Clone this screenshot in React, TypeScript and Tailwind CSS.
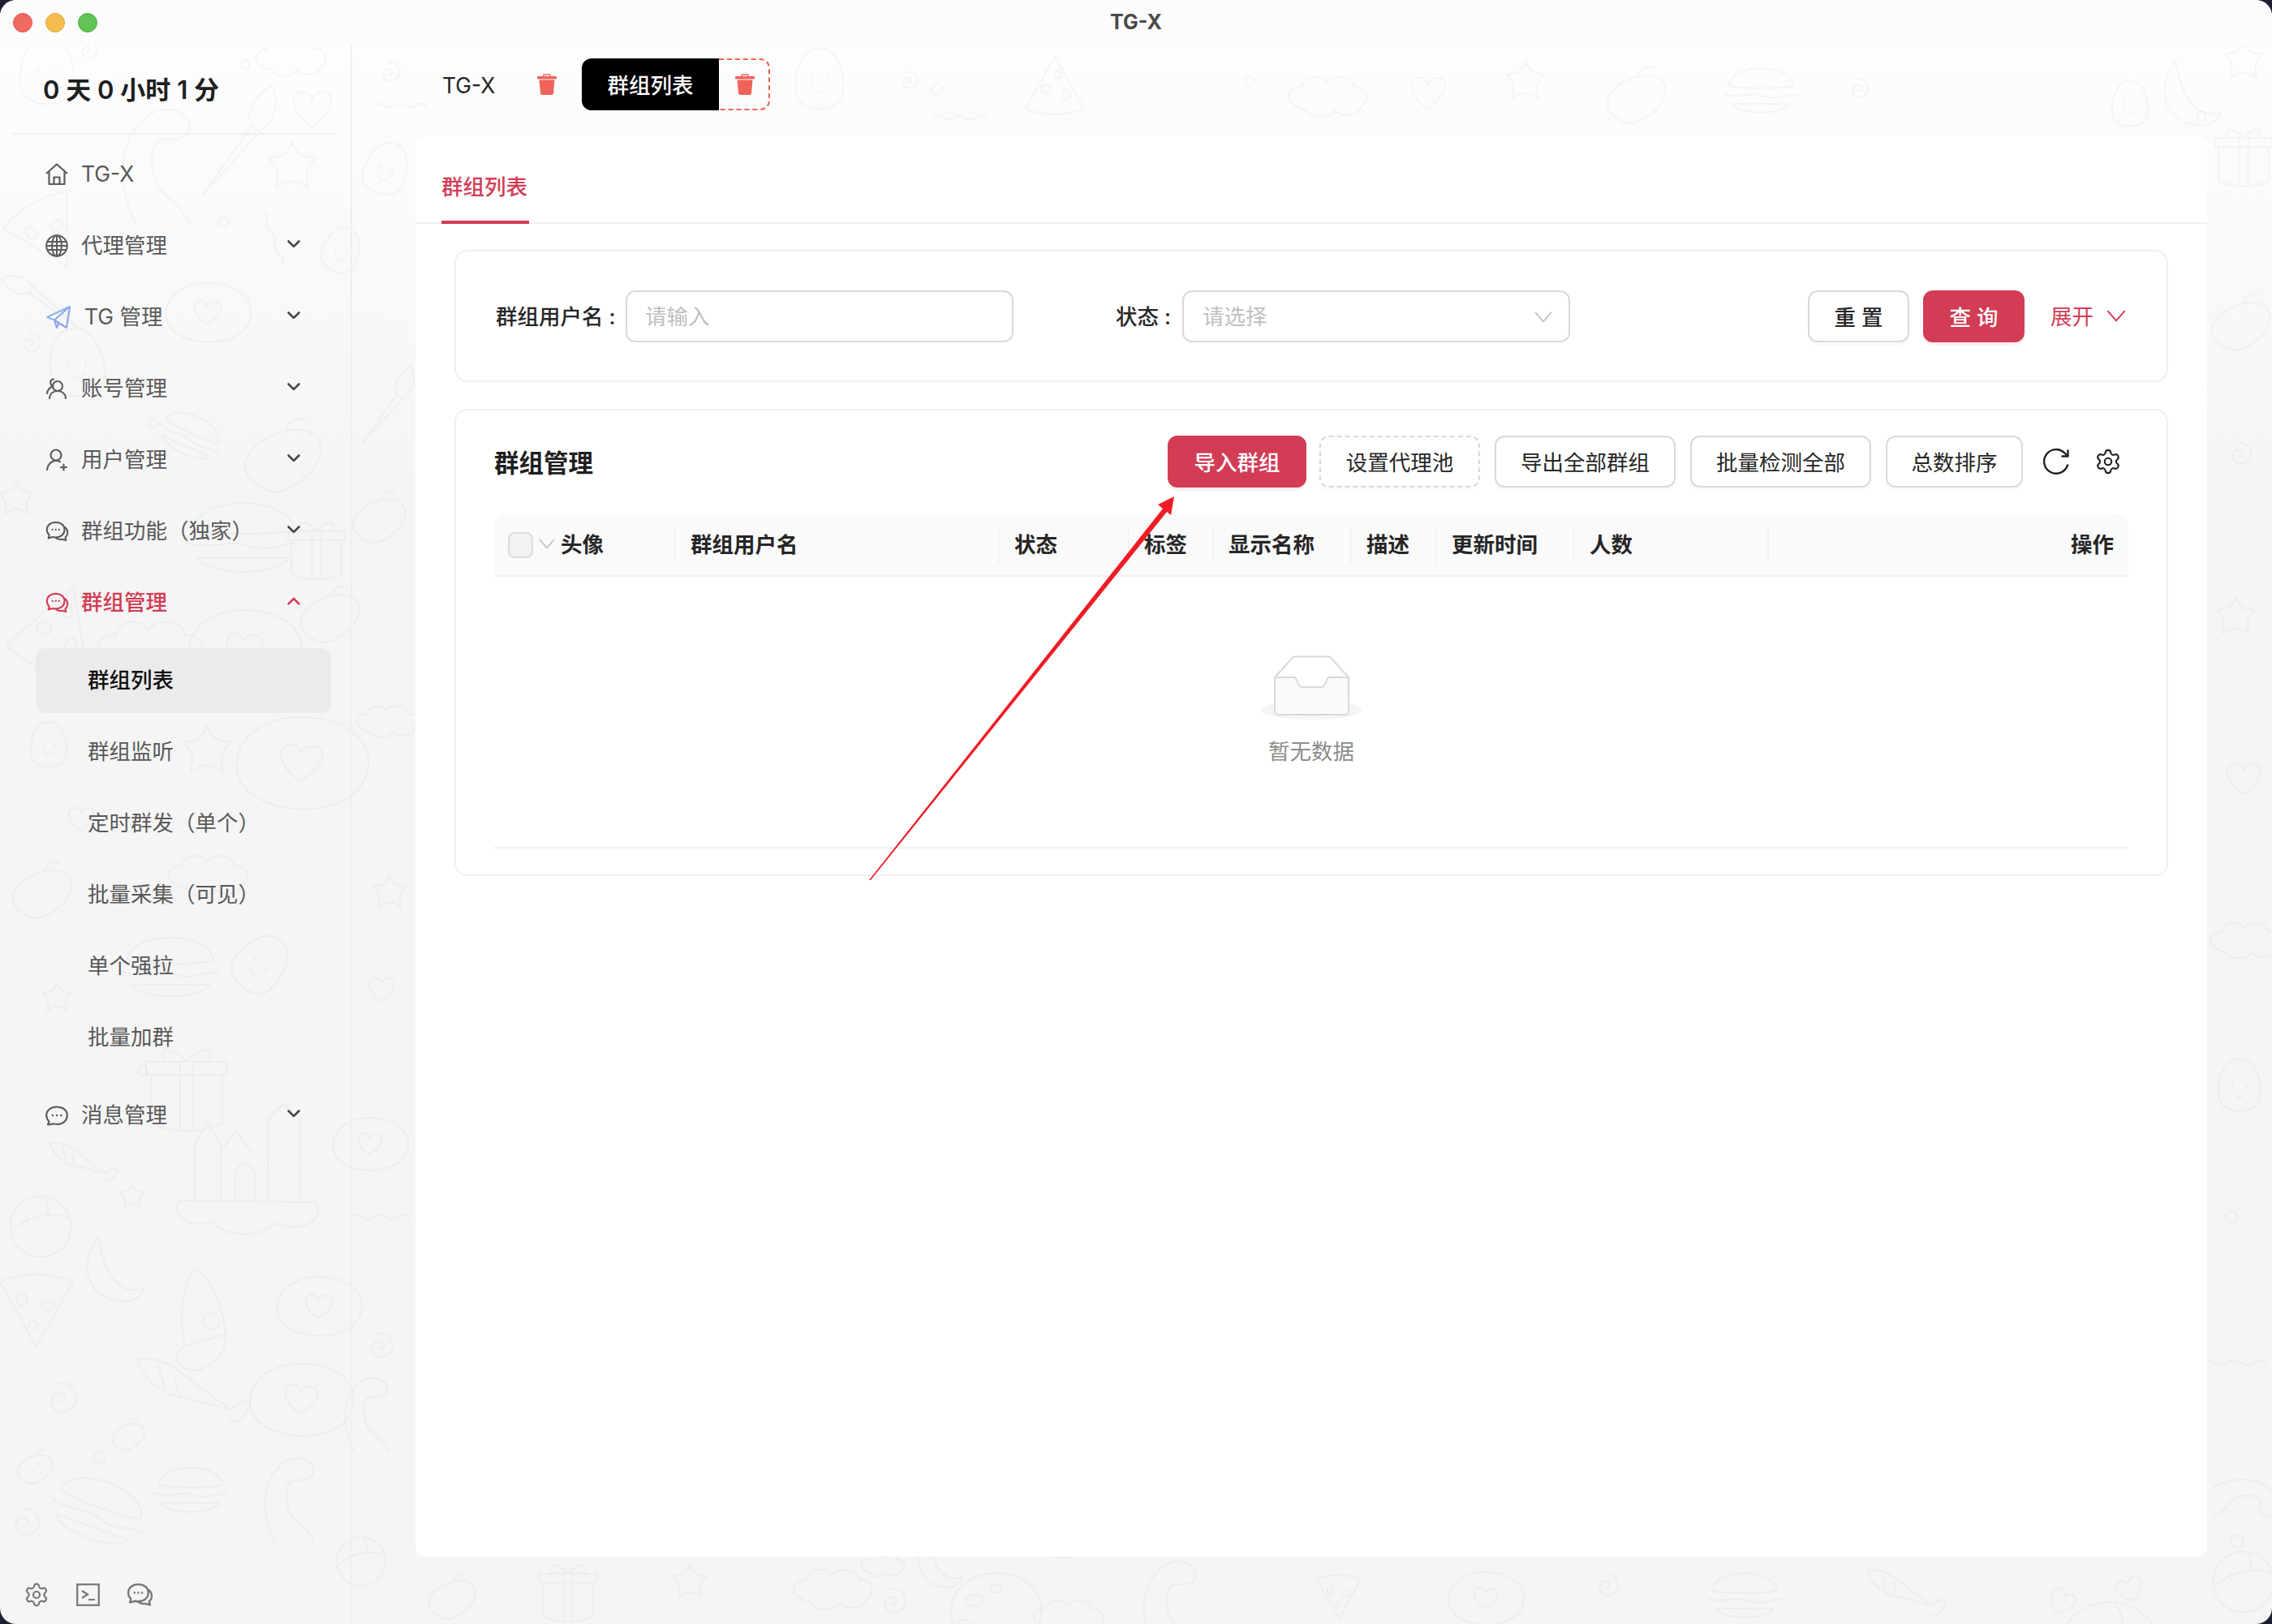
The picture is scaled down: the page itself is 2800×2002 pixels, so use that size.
import React from "react";
import { Settings } from "lucide-react";

const shapes: Record<string, string> = {
  star: "M0 -30C6 -14 12 -12 30 -10C18 0 16 6 20 26C6 16 -4 16 -20 26C-16 8 -18 0 -30 -10C-12 -12 -6 -14 0 -30Z",
  heart: "M0 24C-34 0 -30 -24 -12 -24C-4 -24 0 -16 0 -12C0 -16 6 -24 14 -24C32 -24 32 0 0 24Z",
  ring: "M7 0A7 7 0 1 1 -7 0A7 7 0 1 1 7 0Z",
  spiral: "M-2 2C4 6 8 -2 2 -6C-8 -10 -14 2 -8 10C0 18 16 14 18 0C18 -12 8 -20 -2 -18",
  cloud: "M-50 10C-64 4 -58 -16 -40 -14C-36 -30 -14 -32 -6 -20C4 -32 30 -30 32 -14C50 -16 56 6 42 12C40 26 14 28 6 18C-2 30 -30 30 -34 16C-40 18 -46 14 -50 10Z",
  ball: "M50 0A50 50 0 1 1 -50 0A50 50 0 1 1 50 0ZM-50 10C-20 -20 20 -24 48 -14M6 -48C14 -34 14 -26 10 -18M-24 -16L-20 -2",
  pizza: "M-45 -30C-15 -42 15 -42 45 -30L0 50ZM-18 -16A6 8 0 1 0 -17.9 -16M14 -6A8 6 0 1 0 14.1 -6M-4 18A5 5 0 1 0 -3.9 18",
  face: "M0 -50C30 -50 40 -10 36 20C30 50 -30 50 -36 20C-40 -10 -30 -50 0 -50ZM-12 -6V2M12 -6V2M-8 14Q0 22 8 14",
  brush: "M-40 65L20 -20L30 -12L-40 65M20 -22C10 -40 30 -60 45 -70C55 -50 50 -25 30 -14",
  moon: "M-10 -50C-40 -10 -24 40 30 38C44 36 50 28 52 20C24 30 0 10 -10 -50Z",
  rocket: "M-10 -50C8 -44 24 -10 28 30L-22 44C-30 10 -26 -30 -10 -50ZM10 4A10 10 0 1 0 10.1 4M-22 44C-36 50 -36 70 -16 74C6 76 30 56 28 30",
  castle: "M-70 40V-30L-54 -56L-38 -30V40M-38 -20L-20 -46L0 -20M20 40V-60L40 -80L60 -60V40M-20 40V10C-20 -10 4 -10 4 10V40M-90 40C-100 60 -70 76 -50 66C-30 86 10 86 30 68C60 80 90 66 80 42Z",
  gift: "M-44 -20H44V40C20 52 -20 52 -44 40ZM-50 -36H50V-20H-50ZM-8 -36V46M8 -36V46M0 -36C-20 -60 -40 -50 -24 -36M0 -36C20 -60 40 -50 24 -36",
  palette: "M-44 6C-46 -30 -10 -44 20 -36C44 -28 54 -6 46 14C40 22 30 10 24 22C20 34 12 44 -6 42C-26 42 -42 28 -44 6ZM-20 -16A9 6 0 1 0 -19.9 -16M2 -26A6 4 0 1 0 2.1 -26M-30 10A9 7 0 1 0 -29.9 10",
  donut: "M0 -40C40 -40 62 -20 60 4C56 34 20 44 -10 40C-40 36 -58 20 -56 0C-54 -24 -30 -40 0 -40ZM0 16C-20 4 -22 -16 -8 -16C-2 -16 0 -10 0 -8C2 -12 8 -16 14 -14C26 -10 18 6 0 16Z",
  burger: "M-44 -6C-40 -36 40 -36 44 -6C46 0 -46 0 -44 -6ZM-50 6C-30 14 -10 2 6 10C24 16 40 4 50 8M-40 20C-30 36 30 36 40 20Z",
  shell: "M-56 -34C-30 -40 0 -20 20 0L60 28M-56 -34C-46 -6 -26 10 6 14L60 28M-30 -26L-22 0M-10 -14L-4 10M60 28C76 10 92 16 78 32C72 42 62 46 58 40",
  fruit: "M-20 30C-60 10 -30 -20 0 -26C30 -32 44 -10 22 14C10 26 -6 36 -20 30ZM0 -26C0 -36 12 -40 18 -36M-10 4H-8M4 -8H6M6 10H8",
  wave: "M-30 0C-20 -8 -14 8 -4 0C6 -8 12 8 22 0C28 -4 32 -2 36 0",
  dino: "M-20 70C-40 30 -44 -20 -10 -50C10 -66 36 -60 40 -40C40 -26 22 -24 8 -26C-6 -20 -6 10 6 30C14 40 30 46 40 70",
};

// [shape, x, y, scale, rotate]
const doodles: [string, number, number, number, number][] = [
  ["face", 58, 90, 0.9, 0], ["brush", 290, 175, 1, 0], ["star", 360, 205, 1, 0], ["heart", 385, 135, 0.9, 0],
  ["ring", 302, 80, 0.8, 0], ["cloud", 362, 72, 0.8, 0], ["spiral", 108, 62, 0.6, 0], ["dino", 190, 200, 1.1, 0],
  ["pizza", 58, 285, 1, -30], ["ring", 276, 273, 0.8, 0], ["wave", 335, 290, 1.1, 70], ["face", 420, 310, 0.6, 20],
  ["brush", 50, 375, 0.7, -90], ["donut", 255, 385, 0.9, 0], ["spiral", 37, 423, 0.7, 0],
  ["face", 95, 450, 0.9, -10], ["burger", 235, 535, 0.8, 25], ["ring", 189, 522, 0.8, 0], ["fruit", 353, 565, 1.3, 0],
  ["star", 20, 615, 0.7, 0], ["pizza", 70, 780, 1.2, 200], ["burger", 300, 660, 1.4, 0], ["gift", 390, 680, 0.7, 0],
  ["fruit", 410, 760, 1, 0], ["cloud", 190, 800, 1.2, 0], ["heart", 66, 845, 0.7, 90], ["donut", 300, 800, 1.2, 0],
  ["spiral", 220, 855, 0.9, 0], ["face", 60, 920, 0.6, 0], ["star", 255, 925, 1, 0], ["donut", 370, 940, 1.4, 0],
  ["heart", 100, 1010, 0.6, 0], ["cloud", 260, 1080, 0.9, 0], ["fruit", 55, 1100, 1, 0], ["burger", 210, 1190, 1.2, 0],
  ["star", 70, 1230, 0.6, 0], ["face", 320, 1190, 0.8, 40], ["gift", 230, 1345, 1, 0], ["castle", 310, 1440, 1, 0],
  ["shell", 95, 1430, 0.6, 0], ["ring", 176, 1320, 0.8, 0], ["moon", 130, 1570, 0.9, 0], ["ball", 50, 1512, 0.75, 0],
  ["star", 163, 1475, 0.5, 0], ["pizza", 45, 1610, 1, 0], ["rocket", 250, 1615, 1, 0], ["donut", 392, 1610, 0.9, 0],
  ["shell", 225, 1710, 1, 0], ["spiral", 75, 1725, 1.1, 0], ["donut", 370, 1725, 1.1, 0], ["fruit", 160, 1770, 0.55, 0],
  ["fruit", 45, 1810, 0.6, 0], ["burger", 122, 1860, 1.2, 20], ["burger", 235, 1835, 0.9, 0], ["dino", 355, 1845, 0.8, 0],
  ["spiral", 30, 1878, 1, 0], ["ring", 122, 1797, 1, 0], ["ball", 445, 1925, 0.6, 0], ["dino", 450, 1740, 0.7, 0],
  ["spiral", 468, 1660, 0.9, 0], ["wave", 465, 1500, 1.1, 0], ["donut", 455, 1410, 0.8, 0], ["face", 475, 210, 0.7, 20],
  ["spiral", 480, 90, 0.7, 0], ["wave", 490, 130, 1, 0], ["fruit", 470, 640, 0.9, 0], ["star", 480, 1100, 0.7, 0],
  ["cloud", 480, 890, 0.7, 0], ["heart", 470, 1220, 0.6, 0], ["brush", 475, 500, 0.7, 0],
  ["face", 1010, 100, 0.8, 0], ["spiral", 1120, 100, 0.6, 0], ["ring", 1155, 110, 1, 0], ["wave", 1180, 145, 1, 0],
  ["pizza", 1300, 110, 0.8, 180], ["ring", 1540, 100, 0.8, 0], ["cloud", 1640, 120, 0.9, 0], ["heart", 1760, 115, 0.8, 0],
  ["star", 1880, 100, 0.8, 0], ["fruit", 2020, 120, 1, 0], ["burger", 2170, 110, 0.9, 0], ["spiral", 2290, 110, 0.7, 0],
  ["moon", 2690, 120, 0.9, 0], ["face", 2625, 130, 0.6, 0], ["star", 2765, 75, 0.8, 0], ["ring", 2713, 143, 0.8, 0],
  ["gift", 2765, 195, 0.7, 0], ["fruit", 2765, 400, 1, 0], ["spiral", 2760, 560, 0.8, 0], ["star", 2755, 760, 0.8, 0],
  ["heart", 2765, 960, 0.8, 0], ["cloud", 2770, 1160, 0.8, 0], ["face", 2760, 1340, 0.7, 0], ["ring", 2750, 1500, 1, 0],
  ["wave", 2750, 1680, 1.2, 0], ["dino", 2770, 1845, 0.6, 90], ["ball", 2765, 1950, 0.75, 0], ["ring", 2757, 1900, 1.1, 0],
  ["ball", 2600, 2040, 1.3, 0], ["heart", 2540, 1975, 0.6, 30], ["heart", 2625, 1960, 0.6, -20],
  ["palette", 1225, 1985, 1.2, 0], ["dino", 1440, 1975, 0.85, 0], ["cloud", 1030, 1960, 0.9, 0], ["cloud", 1090, 1930, 0.5, 0],
  ["cloud", 1320, 1995, 0.8, 0], ["spiral", 1100, 1975, 0.9, 0], ["moon", 1150, 1930, 0.7, 0], ["ball", 1310, 1880, 0.8, 0],
  ["gift", 700, 1965, 0.7, 0], ["star", 850, 1950, 0.7, 0], ["fruit", 560, 1970, 0.8, 0], ["pizza", 1650, 1965, 0.6, 0],
  ["donut", 1830, 1970, 0.8, 0], ["spiral", 1980, 1955, 0.8, 0], ["burger", 2150, 1965, 0.9, 0], ["shell", 2340, 1960, 0.7, 0],
];

const stroke = "#5c5c5c";

const Chevron = ({ up, color = "#444", w = 16 }: { up?: boolean; color?: string; w?: number }) => (
  <svg width={w} height={w * 0.62} viewBox="0 0 16 10" fill="none" stroke={color} strokeWidth="2.6" strokeLinecap="round" strokeLinejoin="round">
    <path d={up ? "M1.5 8.5 8 2l6.5 6.5" : "M1.5 1.5 8 8l6.5-6.5"} />
  </svg>
);

const ThinChevron = ({ color, w, h }: { color: string; w: number; h: number }) => (
  <svg width={w} height={h} viewBox="0 0 22 14" fill="none" stroke={color} strokeWidth="1.8" strokeLinecap="round" strokeLinejoin="round">
    <path d="M1.5 1.5 11 12.5 20.5 1.5" />
  </svg>
);

const IconHome = () => (
  <svg width="28" height="28" viewBox="0 0 28 28" fill="none" stroke={stroke} strokeWidth="2.2" strokeLinejoin="round">
    <path d="M1 13 14 1.5 27 13" />
    <path d="M4.5 10.5V26h19V10.5" />
    <path d="M10.5 26v-8.5h7V26" />
  </svg>
);

const IconGlobe = () => (
  <svg width="28" height="28" viewBox="0 0 28 28" fill="none" stroke={stroke} strokeWidth="2">
    <circle cx="14" cy="14" r="12.8" />
    <ellipse cx="14" cy="14" rx="6" ry="12.8" />
    <path d="M14 1v26M2.5 9h23M2.5 19h23M1.2 14h25.6" />
  </svg>
);

const IconPlane = () => (
  <svg width="32" height="30" viewBox="0 0 32 30" fill="none" strokeWidth="2.2" strokeLinejoin="round">
    <defs>
      <linearGradient id="plane" x1="0" y1="0" x2="1" y2="1">
        <stop offset="0" stopColor="#7fd0d8" />
        <stop offset="0.6" stopColor="#8fa4f4" />
      </linearGradient>
    </defs>
    <path stroke="url(#plane)" d="M30 2 2 15l9 3.5L30 2l-4 26-9.5-6L11 18.5 14 28l2.5-6" />
  </svg>
);

const IconUsers = () => (
  <svg width="28" height="28" viewBox="0 0 28 28" fill="none" stroke={stroke} strokeWidth="2.2" strokeLinecap="round">
    <circle cx="15" cy="11" r="6" />
    <path d="M5 26c.5-5.5 4.5-9 10-9s9.500 3.500 10 9" />
    <path d="M10 2.500C7 2.500 5.500 5 6.500 8c.3 1.500 1 2.500 2 3.500C5 13 2.500 16 2 20" />
  </svg>
);

const IconUserPlus = () => (
  <svg width="28" height="28" viewBox="0 0 28 28" fill="none" stroke={stroke} strokeWidth="2.2" strokeLinecap="round">
    <circle cx="13" cy="8" r="6.5" />
    <path d="M2 26c.5-6 5-11 11-11 2 0 3.500.4 5 1.200" />
    <path d="M22.500 19.500v7M19 23h7" />
  </svg>
);

const IconChats = ({ color = stroke, size = 29 }: { color?: string; size?: number }) => (
  <svg width={size} height={size * 0.88} viewBox="0 0 32 28" fill="none" stroke={color} strokeWidth="2.3" strokeLinejoin="round" strokeLinecap="round">
    <path d="M14 2C7 2 2 6 2 12c0 3 1.200 5.500 3.200 7.200L4 23.500l6-1.500c1.200.3 2.500.5 4 .5 7 0 12-4.500 12-10.500S21 2 14 2Z" />
    <path d="M27 9c2 2 3.500 4.500 3 8-.3 2.500-1.500 4.300-3 5.500l1 4-6-1.500c-2.500.6-5 .2-7.500-1.500" />
    <path d="M9.500 12h.1M14 12h.1M18.500 12h.1" strokeWidth="2.4" />
  </svg>
);

const IconChat = () => (
  <svg width="28" height="25" viewBox="0 0 28 25" fill="none" stroke={stroke} strokeWidth="2.2" strokeLinejoin="round" strokeLinecap="round">
    <path d="M14 1.500C6.500 1.500 1.200 6 1.200 12c0 3 1.300 5.500 3.300 7.500L3 23.500l6.500-1.200c1.400.4 3 .7 4.500.7 7.500 0 12.800-4.800 12.800-11S21.500 1.500 14 1.500Z" />
    <path d="M8.800 12h.1M14 12h.1M19.200 12h.1" strokeWidth="2.4" />
  </svg>
);

const IconTerminal = () => (
  <svg width="29" height="28" viewBox="0 0 29 28" fill="none" stroke="#777" strokeWidth="2.2">
    <rect x="1.2" y="1.2" width="26.6" height="25.6" />
    <path d="m7 9 7 4.500-7 4.500M15 20h8" />
  </svg>
);

const IconRefresh = () => (
  <svg width="34" height="34" viewBox="0 0 34 34" fill="none" stroke="#222" strokeWidth="2.4" strokeLinecap="round" strokeLinejoin="round">
    <path d="M31 21.500A14.800 14.800 0 1 1 27.500 6.500L31 10" />
    <path d="M31.500 3.500V10.500H24.500" />
  </svg>
);

const IconTrash = () => (
  <svg width="24" height="26" viewBox="0 0 24 26" fill="#f0635a">
    <path d="M7 3V1.500C7 .7 7.700 0 8.500 0h7c.8 0 1.500.7 1.500 1.500V3h-2V2H9v1H7Z" fill="#f58a83" />
    <rect x="0" y="3" width="24" height="3.5" rx="1" />
    <path d="M2.500 7.500h19L20 24c-.1 1.100-1 2-2.200 2H6.200C5 26 4.100 25.100 4 24L2.500 7.500Z" />
  </svg>
);

const menuTop = [
  { label: "TG-X", icon: <IconHome />, arrow: false },
  { label: "代理管理", icon: <IconGlobe />, arrow: true },
  { label: "TG 管理", icon: <IconPlane />, arrow: true },
  { label: "账号管理", icon: <IconUsers />, arrow: true },
  { label: "用户管理", icon: <IconUserPlus />, arrow: true },
  { label: "群组功能（独家）", icon: <IconChats />, arrow: true },
];

const subMenu = ["群组列表", "群组监听", "定时群发（单个）", "批量采集（可见）", "单个强拉", "批量加群"];

const columns = ["", "群组用户名", "状态", "标签", "显示名称", "描述", "更新时间", "人数"];

const btnBase = "flex h-[64px] items-center justify-center rounded-[12px] border-2 pt-[4px] text-[26.5px]";
const btnDefault = `${btnBase} border-[#d9d9d9] bg-white text-[#262626] shadow-[0_4px_0_rgba(0,0,0,0.02)]`;
const btnPrimary = `${btnBase} border-[#d23c55] bg-[#d23c55] font-medium text-white shadow-[0_4px_0_rgba(210,60,85,0.08)]`;

const App = () => {
  return (
    <div className="h-[2002px] w-[2800px] overflow-hidden bg-[#1c2030] font-['Inter','Noto_Sans_CJK_SC',sans-serif]">
      <div className="relative flex h-full flex-col overflow-hidden rounded-[20px] bg-linear-to-b from-[#fefefe] to-[#f5f5f5] to-[30%]">
        {/* doodle wallpaper */}
        <svg className="absolute left-0 top-0" width="2800" height="2002" fill="none" stroke="rgba(0,0,0,0.032)" strokeWidth="2.2" strokeLinecap="round" strokeLinejoin="round">
          {doodles.map((d, i) => (
            <path key={i} d={shapes[d[0]]} transform={`translate(${d[1]} ${d[2]}) rotate(${d[4]}) scale(${d[3]})`} vectorEffect="non-scaling-stroke" />
          ))}
        </svg>

        {/* title bar */}
        <header className="relative flex h-[56px] shrink-0 items-center justify-center bg-[#fcfcfc]">
          <div className="absolute left-[16px] top-[16px] flex gap-[16px]">
            <span className="h-[24px] w-[24px] rounded-full border border-[#e0574c] bg-[#ef6a5f]" />
            <span className="h-[24px] w-[24px] rounded-full border border-[#dfa43c] bg-[#f5bd4f]" />
            <span className="h-[24px] w-[24px] rounded-full border border-[#52ad46] bg-[#61c454]" />
          </div>
          <span className="text-[25px] font-bold text-[#4a4a4a]">TG-X</span>
        </header>

        <div className="relative flex min-h-0 flex-1">
          {/* sidebar */}
          <aside className="flex w-[434px] shrink-0 flex-col border-r-2 border-[#efefef]">
            <div className="flex h-[108px] items-center pl-[53px] pt-[2px] text-[31px] font-semibold text-[#1f1f1f]">
              0 天 0 小时 1 分
            </div>
            <div className="mx-[16px] h-[2px] w-[400px] bg-[#efefef]" />
            <nav className="flex flex-col pt-[5px] text-[26.5px] text-[#595959]">
              {menuTop.map((m) => (
                <div key={m.label} className="flex h-[88px] items-center pl-[56px] pr-[62px]">
                  <span className="flex w-[44px] shrink-0 items-center">{m.icon}</span>
                  <span className={m.label === "TG 管理" ? "ml-[4px]" : ""}>{m.label}</span>
                  {m.arrow && (
                    <span className="ml-auto mb-[4px]">
                      <Chevron />
                    </span>
                  )}
                </div>
              ))}
              <div className="flex h-[88px] items-center pl-[56px] pr-[62px] font-medium text-[#d23c55]">
                <span className="flex w-[44px] shrink-0 items-center">
                  <IconChats color="#d23c55" />
                </span>
                <span>群组管理</span>
                <span className="ml-auto mb-[4px]">
                  <Chevron up color="#d23c55" />
                </span>
              </div>
              <div className="flex flex-col pt-[8px]">
                {subMenu.map((s, i) => (
                  <div key={s} className="h-[88px] py-[4px] pl-[44px] pr-[24px]">
                    <div className={`flex h-[80px] items-center rounded-[12px] pl-[64px] ${i === 0 ? "bg-[#ebebeb] font-medium text-[#111]" : ""}`}>{s}</div>
                  </div>
                ))}
              </div>
              <div className="mt-[8px] flex h-[88px] items-center pl-[56px] pr-[62px]">
                <span className="flex w-[44px] shrink-0 items-center">
                  <IconChat />
                </span>
                <span>消息管理</span>
                <span className="ml-auto mb-[4px]">
                  <Chevron />
                </span>
              </div>
            </nav>
            <div className="mt-auto flex items-center gap-[33px] pb-[20px] pl-[29px]">
              <Settings size={32} color="#777" strokeWidth={1.6} />
              <IconTerminal />
              <IconChats color="#777" size={33} />
            </div>
          </aside>

          {/* main */}
          <main className="flex min-w-0 flex-1 flex-col pb-[83px] pl-[78px] pr-[80px]">
            <div className="mt-[16px] flex h-[64px] shrink-0 items-center pl-[33px] text-[26.5px]">
              <span className="w-[117px] pt-[3px] text-[#222]">TG-X</span>
              <IconTrash />
              <div className="ml-[31px] flex h-[64px] w-[169px] items-center justify-center rounded-l-[12px] bg-black pt-[3px] font-medium text-white">群组列表</div>
              <div className="flex h-[64px] w-[63px] items-center justify-center rounded-r-[12px] border-2 border-l-0 border-dashed border-[#f0635a] pl-[2px]">
                <IconTrash />
              </div>
            </div>

            <section className="mt-[32px] flex min-h-0 flex-1 flex-col rounded-[12px] bg-white">
              <div className="flex h-[108px] shrink-0 items-end border-b-2 border-[#f0f0f0] pl-[32px]">
                <div className="mb-[-2px] flex h-[108px] w-[108px] items-center border-b-4 border-[#d23c55] pt-[22px] text-[26.5px] font-medium text-[#d23c55]">群组列表</div>
              </div>

              {/* filter */}
              <div className="mx-[48px] mt-[32px] flex h-[163px] shrink-0 items-center rounded-[16px] border-2 border-[#f0f0f0] px-[49px] text-[26.5px] text-[#262626]">
                <span className="w-[160px] shrink-0 pt-[3px] font-medium">群组用户名 :</span>
                <div className="flex h-[64px] w-[478px] items-center rounded-[12px] border-2 border-[#d9d9d9] pl-[22px] pt-[3px] text-[#bfbfbf]">请输入</div>
                <span className="ml-[126px] w-[82px] shrink-0 pt-[3px] font-medium">状态 :</span>
                <div className="flex h-[64px] w-[478px] items-center justify-between rounded-[12px] border-2 border-[#d9d9d9] pl-[23px] pr-[20px] pt-[3px] text-[#bfbfbf]">
                  请选择
                  <ThinChevron color="#bfbfbf" w={22} h={14} />
                </div>
                <button className={`${btnDefault} ml-auto w-[125px] font-medium`}>重 置</button>
                <button className={`${btnPrimary} ml-[17px] w-[125px]`}>查 询</button>
                <span className="ml-[32px] pt-[3px] text-[#d23c55]">展开</span>
                <span className="ml-[16px] mr-[1px]">
                  <ThinChevron color="#d23c55" w={24} h={15} />
                </span>
              </div>

              {/* table card */}
              <div className="mx-[48px] mt-[33px] flex h-[576px] shrink-0 flex-col rounded-[16px] border-2 border-[#f0f0f0] px-[47px] pt-[31px]">
                <div className="flex h-[64px] shrink-0 items-center">
                  <span className="mr-auto pt-[3px] text-[30.5px] font-semibold text-[#1f1f1f]">群组管理</span>
                  <button className={`${btnPrimary} w-[171px]`}>导入群组</button>
                  <button className={`${btnDefault} ml-[16px] w-[198px] border-dashed`}>设置代理池</button>
                  <button className={`${btnDefault} ml-[18px] w-[223px]`}>导出全部群组</button>
                  <button className={`${btnDefault} ml-[18px] w-[223px]`}>批量检测全部</button>
                  <button className={`${btnDefault} ml-[18px] w-[169px]`}>总数排序</button>
                  <span className="ml-[24px]">
                    <IconRefresh />
                  </span>
                  <span className="ml-[30px] mr-[8px]">
                    <Settings size={34} color="#222" strokeWidth={1.5} />
                  </span>
                </div>

                <div className="mt-[32px] grid h-[78px] shrink-0 grid-cols-[224px_399px_160px_104px_170px_105px_170px_239px_1fr] rounded-t-[16px] border-b-2 border-[#f0f0f0] bg-[#fafafa] pt-[2px] text-[26.5px] font-semibold text-[#262626]">
                  {columns.map((c, i) => (
                    <div key={i} className="flex items-center justify-between">
                      {i === 0 ? (
                        <div className="flex items-center pl-[17px]">
                          <span className="h-[32px] w-[31px] rounded-[8px] border-2 border-[#dcdcdc] bg-[#f2f2f2]" />
                          <span className="ml-[7px] mb-[4px]">
                            <ThinChevron color="#bfbfbf" w={20} h={13} />
                          </span>
                          <span className="ml-[7px]">头像</span>
                        </div>
                      ) : (
                        <span className="pl-[18px]">{c}</span>
                      )}
                      <span className="h-[44px] w-[2px] bg-[#f2f2f2]" />
                    </div>
                  ))}
                  <div className="flex items-center justify-end pr-[18px]">操作</div>
                </div>

                <div className="flex h-[335px] shrink-0 flex-col items-center border-b-2 border-[#f0f0f0] pt-[97px]">
                  <svg width="126" height="80" viewBox="0 0 126 80" fill="none">
                    <ellipse cx="63" cy="67" rx="62" ry="12.5" fill="#f5f5f5" />
                    <path d="M18 27 41 1.500h45L109 27v42a4 4 0 0 1-4 4H22a4 4 0 0 1-4-4Z" fill="#fff" />
                    <path d="M18 27h24c4 0 3 12 10 12h23c7 0 6-12 10-12h24v42a4 4 0 0 1-4 4H22a4 4 0 0 1-4-4Z" fill="#fafafa" />
                    <path d="M18 27 41 1.500h45L109 27M18 27h24c4 0 3 12 10 12h23c7 0 6-12 10-12h24v42a4 4 0 0 1-4 4H22a4 4 0 0 1-4-4Z" stroke="#d9d9d9" strokeWidth="2" strokeLinejoin="round" />
                  </svg>
                  <span className="mt-[18px] text-[26.5px] leading-[40px] text-[#8c8c8c]">暂无数据</span>
                </div>
              </div>
            </section>
          </main>
        </div>

        {/* annotation arrow drawn over the screenshot */}
        <svg className="absolute left-0 top-0" width="2800" height="2002">
          <polygon points="1447,612 1427,622 1433,627 1071,1085 1073,1085 1438,631 1443,635" fill="#ee1c25" />
        </svg>
      </div>
    </div>
  );
};

export default App;
